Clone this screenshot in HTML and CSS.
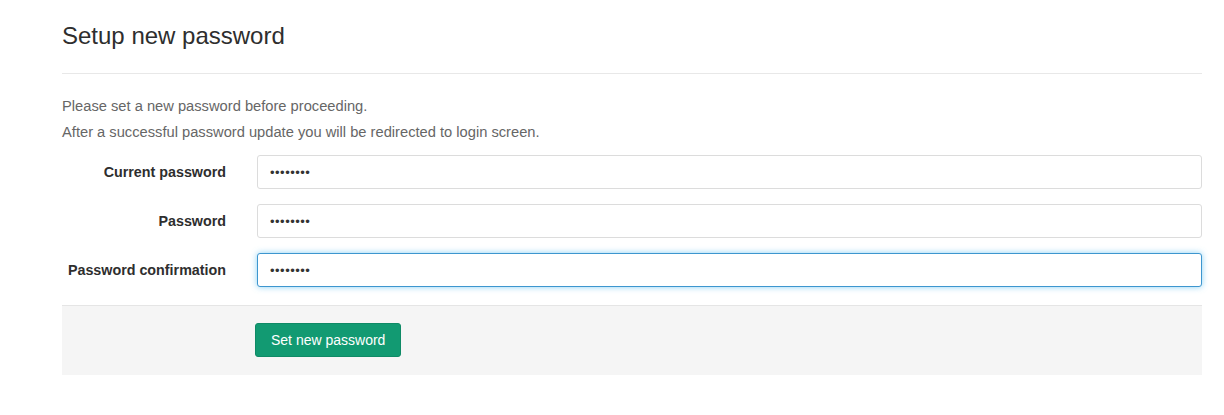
FILE: index.html
```html
<!DOCTYPE html>
<html>
<head>
<meta charset="utf-8">
<link rel="stylesheet" href="styles.css">
</head>
<body>
<div class="page">
  <h3 class="page-title">Setup new password</h3>
  <hr class="divider">
  <div class="intro">
    <p>Please set a new password before proceeding.</p>
    <p>After a successful password update you will be redirected to login screen.</p>
  </div>
  <form class="form">
    <div class="row">
      <label class="label">Current password</label>
      <input class="input" type="password" value="12345678">
    </div>
    <div class="row">
      <label class="label">Password</label>
      <input class="input" type="password" value="12345678">
    </div>
    <div class="row">
      <label class="label">Password confirmation</label>
      <input class="input input-focus" type="password" value="12345678">
    </div>
    <div class="actions">
      <button type="button" class="btn">Set new password</button>
    </div>
  </form>
</div>
</body>
</html>
```
FILE: styles.css
```css
html, body {
  margin: 0;
  padding: 0;
  background: #fff;
}
body {
  font-family: "Liberation Sans", Arial, sans-serif;
  color: #333;
}
.page {
  width: 1140px;
  margin-left: 62px;
  padding-top: 21px;
}
.page-title {
  margin: 0;
  font-size: 24px;
  font-weight: normal;
  line-height: 30px;
  color: #2e2e2e;
}
.divider {
  border: 0;
  border-top: 1px solid #e8e8e8;
  margin: 22px 0 0 0;
}
.intro {
  margin-top: 22px;
  font-size: 14.7px;
  color: #666;
}
.intro p {
  margin: 0 0 6px 0;
  line-height: 20px;
}
.form {
  margin-top: 13px;
}
.row {
  display: flex;
  align-items: center;
  margin-bottom: 15px;
}
.label {
  width: 164px;
  text-align: right;
  font-size: 14.3px;
  font-weight: bold;
  color: #2e2e2e;
  margin-right: 31px;
}
.input {
  flex: 1;
  box-sizing: border-box;
  height: 34px;
  border: 1px solid #dcdcdc;
  border-radius: 3px;
  padding: 0 12px;
  font-family: "Liberation Sans", Arial, sans-serif;
  font-size: 13px;
  letter-spacing: 0.5px;
  color: #333;
  outline: none;
  background: #fff;
}
.input-focus {
  border-color: #3d96cf;
  box-shadow: 0 0 6px rgba(90, 190, 240, 0.7);
}
.actions {
  margin-top: 18px;
  background: #f5f5f5;
  border-top: 1px solid #e5e5e5;
  padding: 17px 0 18px 193px;
}
.btn {
  height: 34px;
  padding: 0 15px;
  background: #129a72;
  border: 1px solid #0f8a66;
  border-radius: 3px;
  color: #fff;
  font-family: "Liberation Sans", Arial, sans-serif;
  font-size: 14px;
  cursor: pointer;
}
```
